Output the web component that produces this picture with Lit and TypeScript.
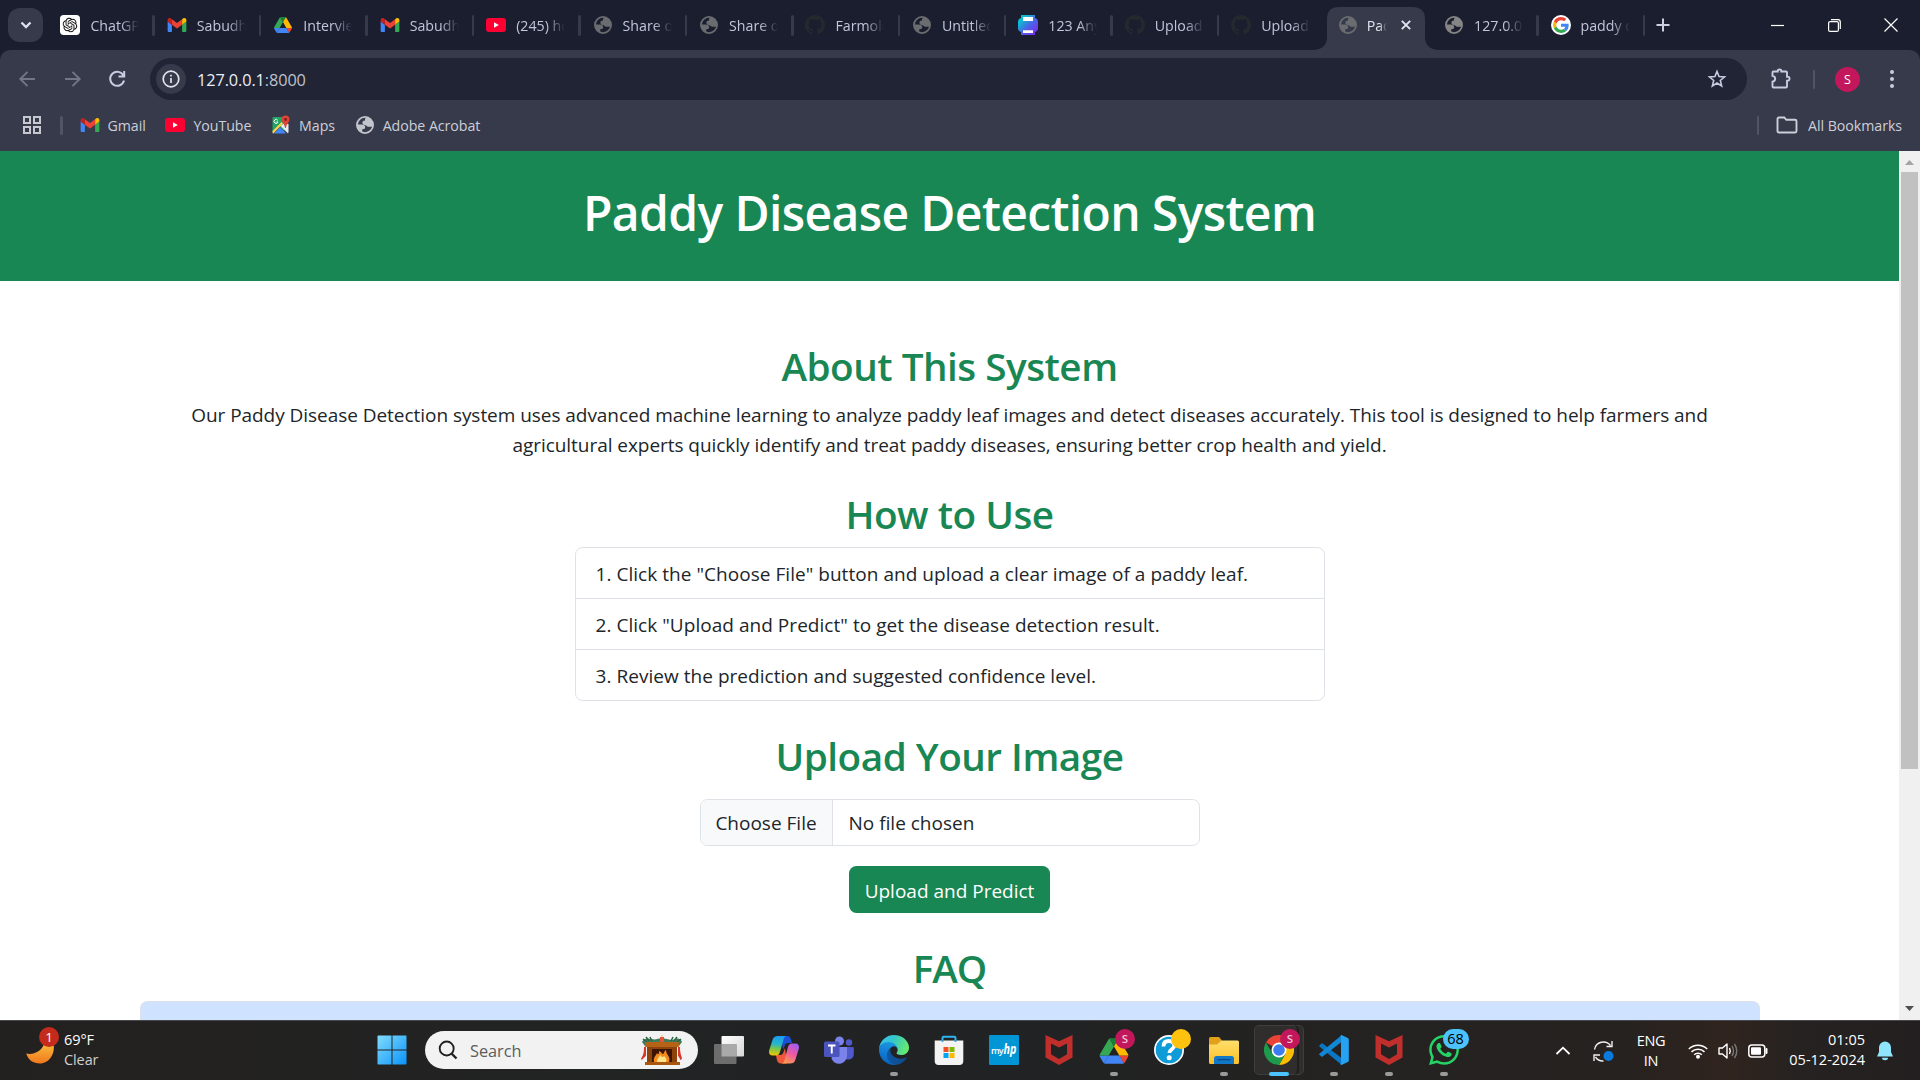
import { LitElement, html, css, TemplateResult } from "lit";
import { customElement } from "lit/decorators.js";
import { classMap } from "lit/directives/class-map.js";

/* ---------- icons ---------- */

const gmail = html`<svg class="ico" width="20" height="20" viewBox="49 31 94 88">
  <path fill="#4285f4" d="M58 108h14V74L52 59v43c0 3.32 2.69 6 6 6" />
  <path fill="#34a853" d="M120 108h14c3.32 0 6-2.69 6-6V59l-20 15" />
  <path fill="#fbbc04" d="M120 48v26l20-15v-8c0-7.42-8.47-11.65-14.4-7.2" />
  <path fill="#ea4335" d="M72 74V48l24 18 24-18v26L96 92" />
  <path fill="#c5221f" d="M52 51v8l20 15V48l-5.6-4.2c-5.94-4.45-14.4-.22-14.4 7.2" />
</svg>`;

const drive = (size: number) => html`<svg class="ico" width=${size} height=${size} viewBox="-5 -6 97.3 90">
  <path fill="#4285f4" d="m6.6 66.85 3.85 6.65c.8 1.4 1.95 2.5 3.3 3.3l13.75-23.8h-27.5c0 1.55.4 3.1 1.2 4.5z" />
  <path fill="#34a853" d="m43.65 25-13.75-23.8c-1.35.8-2.5 1.9-3.3 3.3l-25.4 44a9.06 9.06 0 0 0-1.2 4.5h27.5z" />
  <path fill="#ea4335" d="m73.55 76.8c1.35-.8 2.5-1.9 3.3-3.3l1.6-2.75 7.65-13.25c.8-1.4 1.2-2.95 1.2-4.5h-27.502l5.852 11.5z" />
  <path fill="#188038" d="m43.65 25 13.75-23.8c-1.35-.8-2.9-1.2-4.5-1.2h-18.5c-1.6 0-3.15.45-4.5 1.2z" />
  <path fill="#4285f4" d="m59.8 53h-32.3l-13.75 23.8c1.35.8 2.9 1.2 4.5 1.2h50.8c1.6 0 3.15-.45 4.5-1.2z" />
  <path fill="#ffba00" d="m73.4 26.5-12.7-22c-.8-1.4-1.95-2.5-3.3-3.3l-13.75 23.8 16.15 28h27.45c0-1.55-.4-3.1-1.2-4.5z" />
</svg>`;

const youtube = html`<svg class="ico" width="20" height="20" viewBox="0 0 20 20">
  <rect x="0" y="3" width="20" height="14" rx="3" fill="#ff0033" />
  <path fill="#fff" d="M8 7.3v5.4l4.8-2.7z" />
</svg>`;

const globe = (color: string) => html`<svg class="ico" width="20" height="20" viewBox="0 0 20 20">
  <circle cx="10" cy="10" r="8.100" fill="none" stroke=${color} stroke-width="1.800" />
  <path fill=${color} d="M2 9.600h4.600c2.200 0 3.600 1 3.600 2.700 0 1.500-.9 1.900-2.300 1.900H7.200v3.600C4 16.800 1.600 13.800 2 9.600z" />
  <path fill=${color} d="M12.600 2.300C11 2.600 10 3.300 10 4.400v1.200C8.400 5.600 7.400 6.400 7.400 7.700S8.600 9.900 10.400 10.200c1.200.2 1.400 1.300 2.600 1.600h4.700c1-4.500-1.700-8.500-5.100-9.500z" />
</svg>`;

const github = html`<svg class="ico" width="20" height="20" viewBox="0 0 16 16">
  <path fill="#24292e" d="M8 0C3.58 0 0 3.58 0 8c0 3.54 2.29 6.53 5.47 7.59.4.07.55-.17.55-.38 0-.19-.01-.82-.01-1.49-2.01.37-2.53-.49-2.69-.94-.09-.23-.48-.94-.82-1.13-.28-.15-.68-.52-.01-.53.63-.01 1.08.58 1.23.82.72 1.21 1.87.87 2.33.66.07-.52.28-.87.51-1.07-1.78-.2-3.64-.89-3.64-3.95 0-.87.31-1.59.82-2.15-.08-.2-.36-1.02.08-2.12 0 0 .67-.21 2.2.82.64-.18 1.32-.27 2-.27s1.36.09 2 .27c1.53-1.04 2.2-.82 2.2-.82.44 1.1.16 1.92.08 2.12.51.56.82 1.27.82 2.15 0 3.07-1.87 3.75-3.65 3.95.29.25.54.73.54 1.48 0 1.07-.01 1.93-.01 2.2 0 .21.15.46.55.38A8.01 8.01 0 0 0 16 8c0-4.42-3.58-8-8-8" />
</svg>`;

const openai = html`<svg class="ico" width="20" height="20" viewBox="-4.500 -4.500 33 33">
  <rect x="-4.500" y="-4.500" width="33" height="33" rx="6" fill="#fff" />
  <path fill="#111" d="M22.2819 9.8211a5.9847 5.9847 0 0 0-.5157-4.9108 6.0462 6.0462 0 0 0-6.5098-2.9A6.0651 6.0651 0 0 0 4.9807 4.1818a5.9847 5.9847 0 0 0-3.9977 2.9 6.0462 6.0462 0 0 0 .7427 7.0966 5.98 5.98 0 0 0 .511 4.9107 6.051 6.051 0 0 0 6.5146 2.9001A5.9847 5.9847 0 0 0 13.2599 24a6.0557 6.0557 0 0 0 5.7718-4.2058 5.9894 5.9894 0 0 0 3.9977-2.9001 6.0557 6.0557 0 0 0-.7475-7.0729zm-9.022 12.6081a4.4755 4.4755 0 0 1-2.8764-1.0408l.1419-.0804 4.7783-2.7582a.7948.7948 0 0 0 .3927-.6813v-6.7369l2.02 1.1686a.071.071 0 0 1 .038.052v5.5826a4.504 4.504 0 0 1-4.4945 4.4944zm-9.6607-4.1254a4.4708 4.4708 0 0 1-.5346-3.0137l.142.0852 4.783 2.7582a.7712.7712 0 0 0 .7806 0l5.8428-3.3685v2.3324a.0804.0804 0 0 1-.0332.0615L9.74 19.9502a4.4992 4.4992 0 0 1-6.1408-1.6464zM2.3408 7.8956a4.485 4.485 0 0 1 2.3655-1.9728V11.6a.7664.7664 0 0 0 .3879.6765l5.8144 3.3543-2.0201 1.1685a.0757.0757 0 0 1-.071 0l-4.8303-2.7865A4.504 4.504 0 0 1 2.3408 7.872zm16.5963 3.8558L13.1038 8.364 15.1192 7.2a.0757.0757 0 0 1 .071 0l4.8303 2.7913a4.4944 4.4944 0 0 1-.6765 8.1042v-5.6772a.79.79 0 0 0-.407-.667zm2.0107-3.0231l-.142-.0852-4.7735-2.7818a.7759.7759 0 0 0-.7854 0L9.409 9.2297V6.8974a.0662.0662 0 0 1 .0284-.0615l4.8303-2.7866a4.4992 4.4992 0 0 1 6.6802 4.66zM8.3065 12.863l-2.02-1.1638a.0804.0804 0 0 1-.038-.0567V6.0742a4.4992 4.4992 0 0 1 7.3757-3.4537l-.142.0805L8.704 5.459a.7948.7948 0 0 0-.3927.6813zm1.0976-2.3654l2.602-1.4998 2.6069 1.4998v2.9994l-2.5974 1.4997-2.6067-1.4997Z" />
</svg>`;

const printer = html`<svg class="ico" width="20" height="20" viewBox="0 0 20 20">
  <defs><linearGradient id="pr" x1="0" y1="0" x2="1" y2="1">
    <stop offset="0" stop-color="#00c4cc" /><stop offset=".25" stop-color="#12b5d2" /><stop offset=".55" stop-color="#4a63e8" /><stop offset="1" stop-color="#8b1cf0" />
  </linearGradient></defs>
  <path fill="url(#pr)" d="M3 0h14v3l2 1 1 2v8l-1 2-2 1v3H3v-3l-2-1-1-2V6l1-2 2-1z" />
  <path fill="#fff" d="M5 2h10v4H5zM5 15.300h10v2.700H5z" />
</svg>`;

const google = html`<svg class="ico" width="20" height="20" viewBox="-6 -6 60 60">
  <circle cx="24" cy="24" r="30" fill="#fff" />
  <path fill="#EA4335" d="M24 9.5c3.54 0 6.71 1.22 9.21 3.6l6.85-6.85C35.900 2.380 30.470 0 24 0 14.620 0 6.510 5.380 2.560 13.220l7.980 6.190C12.430 13.720 17.740 9.500 24 9.500z" />
  <path fill="#4285F4" d="M46.980 24.550c0-1.570-.15-3.090-.38-4.550H24v9.020h12.940c-.58 2.960-2.260 5.480-4.780 7.180l7.730 6c4.510-4.180 7.090-10.360 7.090-17.650z" />
  <path fill="#FBBC05" d="M10.530 28.590c-.48-1.450-.76-2.990-.76-4.590s.27-3.140.76-4.590l-7.980-6.190C.92 16.460 0 20.120 0 24c0 3.880.92 7.540 2.560 10.780l7.970-6.190z" />
  <path fill="#34A853" d="M24 48c6.480 0 11.930-2.130 15.890-5.810l-7.730-6c-2.150 1.450-4.920 2.300-8.160 2.300-6.260 0-11.570-4.220-13.470-9.910l-7.980 6.190C6.510 42.620 14.620 48 24 48z" />
</svg>`;

const maps = html`<svg class="ico" width="20" height="20" viewBox="0 0 20 20">
  <path fill="#1fa463" d="M2.500 2h11v14.500l-6-6-6 7V3a1 1 0 0 1 1-1z" />
  <path fill="#e8eaed" d="M17.500 9v8a1.500 1.500 0 0 1-.7 1.300L9.500 11l4-3z" />
  <path fill="#4285f4" d="M3 18.500l6-6.500 6.200 6.500z" />
  <path fill="#ffd04b" d="M1.500 16L10.500 7l1.500 1.600-9.600 9.900c-.6 0-.9-.5-.9-1z" />
  <path d="M6.800 5.300A2 2 0 1 0 7 7H5.300" fill="none" stroke="#fff" stroke-width="1" />
  <path fill="#db4437" d="M14.500.5a4 4 0 0 1 4 4c0 3-3 4-3.600 8.500h-.8c-.6-4.500-3.600-5.500-3.600-8.500a4 4 0 0 1 4-4z" />
  <circle cx="14.500" cy="4.500" r="1.400" fill="#7d2019" />
</svg>`;

const fireplace = html`<svg width="42" height="32" viewBox="0 0 42 32">
  <path d="M1 8C5 1 12 7 16 5S27 5 30 6s8-5 11 2l-3 4-3-4H7l-3 4z" fill="#3f7d5a" />
  <path d="M2 5l4 3M5 3l3 4M36 3l-3 4M40 5l-4 3M9 3l2 4M32 3l-2 4" stroke="#2c6245" stroke-width="1.500" />
  <rect x="19" y="3" width="4" height="7" fill="#e2543e" /><path d="M20.300 2.500Q21-1 21.700 2.500z" fill="#f7a531" />
  <rect x="4" y="8" width="34" height="5" rx="1" fill="#b56417" />
  <rect x="6" y="13" width="30" height="16" fill="#8e430c" />
  <rect x="4" y="28" width="35" height="3" fill="#a9570f" />
  <rect x="11" y="15" width="20" height="13" fill="#3b1405" />
  <path d="M13 28c-1-5 2-6 3-9 1 2 2 2 2-2 3 1 3 3 4 3s1-3 3-4c0 5 5 6 3 12z" fill="#f28a1c" />
  <path d="M16 28c0-4 2-4 3-7 2 2 3 3 4 1 2 2 3 3 2 6z" fill="#ffe28a" />
  <path d="M5 13v8c0 2-3 3-4 5l-1-1c1-3 3-3 3-12zM37 13v8c0 2 2 2 2 5l2-1c0-3-2-4-2-12z" fill="#d8382b" />
</svg>`;

const windows = html`<svg width="30" height="30" viewBox="0 0 30 30">
  <defs><linearGradient id="win" x1="0" y1="0" x2="1" y2="1"><stop offset="0" stop-color="#82dcfb" /><stop offset="1" stop-color="#0a93fb" /></linearGradient></defs>
  <path fill="url(#win)" d="M1 .5h13.500v14H.5V1zM15.500.5H29l.5.5v13.500h-14zM.5 15.500h14v14H1l-.5-.5zM15.500 15.500h14V29l-.5.5H15.500z" />
</svg>`;

const taskView = html`<svg width="30" height="30" viewBox="0 0 30 30">
  <defs><linearGradient id="tv" x1="0" y1="0" x2="1" y2="1"><stop offset="0" stop-color="#fff" /><stop offset="1" stop-color="#d6d6d6" /></linearGradient></defs>
  <rect x="7.500" y="1" width="22.500" height="20.500" rx="1" fill="url(#tv)" />
  <rect x="0" y="9" width="22.500" height="20" rx="1" fill="#6d6d6d" />
  <rect x="7.500" y="9" width="15" height="12.500" fill="#a9a9a9" />
</svg>`;

const copilot = html`<svg width="30" height="30" viewBox="0 0 30 30">
  <defs>
    <linearGradient id="c1" x1=".3" y1="0" x2=".2" y2="1"><stop offset="0" stop-color="#1c9df0" /><stop offset=".4" stop-color="#25b7c8" /><stop offset=".65" stop-color="#7cc64a" /><stop offset="1" stop-color="#f4c800" /></linearGradient>
    <linearGradient id="c2" x1=".7" y1="0" x2=".2" y2="1"><stop offset="0" stop-color="#a45cf0" /><stop offset=".45" stop-color="#ee5aa0" /><stop offset="1" stop-color="#ffa04a" /></linearGradient>
  </defs>
  <path fill="#1b4fd8" d="M12 1h6c2.500 0 3.500 1.500 4.200 4L23 8h-4c-2 0-3 1-3.500 3l-1.500 4z" />
  <path fill="#f0583a" d="M18 28.500h-6c-2.500 0-3.500-1.500-4.200-4L7 20h4c2 0 3-1 3.500-3l1.500-4z" />
  <path fill="url(#c1)" d="M9 1h9c-2 0-3 1.500-3.500 3.500L11 17c-.8 2.500-2 3.500-4 3.500H3.500C.5 20.500-.5 18 .3 15L3.500 5C4.500 2 6 1 9 1z" />
  <path fill="url(#c2)" d="M21 28.500h-9c2 0 3-1.500 3.500-3.500L19 12c.8-2.500 2-3.500 4-3.500h3.500c3 0 4 2.500 3.200 5.500l-3.200 10.500c-1 3-2.500 4-5.500 4z" />
</svg>`;

const teams = html`<svg width="30" height="30" viewBox="0 0 30 30">
  <circle cx="25" cy="7.500" r="3.200" fill="#5059c9" /><circle cx="15.500" cy="6" r="4.500" fill="#7b83eb" />
  <path fill="#5059c9" d="M20 12h8.500a1.300 1.300 0 0 1 1.300 1.300V19a5.500 5.500 0 0 1-8 5z" />
  <path fill="#7b83eb" d="M9 12h14v9a8 8 0 0 1-15.500 2.500z" />
  <rect x="0" y="6.500" width="15.500" height="15.500" rx="1.500" fill="#4b53bc" />
  <path d="M4 10.500h7.500M7.750 10.500v8" stroke="#fff" stroke-width="1.900" />
</svg>`;

const edge = html`<svg width="30" height="30" viewBox="0 0 256 256">
  <defs>
    <linearGradient id="e1" x1="0" y1=".5" x2="1" y2=".6"><stop offset="0" stop-color="#0c59a4" /><stop offset="1" stop-color="#114a8b" /></linearGradient>
    <linearGradient id="e2" x1=".6" y1="0" x2=".4" y2="1"><stop offset="0" stop-color="#1b9de2" /><stop offset=".5" stop-color="#127cd5" /><stop offset="1" stop-color="#0960b8" /></linearGradient>
    <linearGradient id="e3" x1="0" y1=".2" x2="1" y2=".5"><stop offset="0" stop-color="#35c1f1" /><stop offset=".45" stop-color="#36c6c9" /><stop offset="1" stop-color="#66eb6e" /></linearGradient>
  </defs>
  <g transform="translate(-4.630 -4.920)">
    <path fill="url(#e1)" d="M235.680 195.460a93.730 93.730 0 0 1-10.540 4.710 101.870 101.870 0 0 1-35.900 6.460c-47.320 0-88.540-32.550-88.540-74.320A31.480 31.480 0 0 1 117.130 105c-42.800 1.800-53.800 46.400-53.800 72.530 0 73.880 68.090 81.370 82.760 81.370 7.910 0 19.840-2.300 27-4.560l1.310-.44a128.340 128.340 0 0 0 66.600-52.800 4 4 0 0 0-5.320-5.640z" />
    <path fill="url(#e2)" d="M110.340 246.340A79.200 79.200 0 0 1 87.600 225a80.720 80.720 0 0 1 29.530-120c3.120-1.470 8.450-4.130 15.540-4a32.350 32.350 0 0 1 25.690 13 31.880 31.880 0 0 1 6.360 18.660c0-.21 24.460-79.600-80-79.600-43.900 0-80 41.660-80 78.210a130.150 130.150 0 0 0 12.110 56 128 128 0 0 0 156.380 67.110 75.550 75.550 0 0 1-62.780-8z" />
    <path fill="url(#e3)" d="M156.940 153.780c-.81 1.050-3.300 2.500-3.300 5.660 0 2.610 1.700 5.120 4.720 7.230 14.380 10 41.490 8.680 41.560 8.680a59.560 59.560 0 0 0 30.270-8.350 61.380 61.380 0 0 0 30.430-52.880c.26-22.410-8-37.310-11.340-43.910C228.090 28.760 182.350 5 132.610 5a128 128 0 0 0-128 126.200c.48-36.540 36.800-66.050 80-66.050 3.500 0 23.460.34 42 10.070 16.340 8.580 24.900 18.940 30.850 29.210 6.180 10.670 7.280 24.150 7.280 29.520s-2.740 13.330-7.800 19.830z" />
  </g>
</svg>`;

const store = html`<svg width="30" height="30" viewBox="0 0 30 30">
  <path d="M8.500 6.500V3q0-1.200 1.200-1.200h10.600q1.200 0 1.200 1.200v3.500" fill="none" stroke="#2fb4f0" stroke-width="2" />
  <path fill="#f3f3f3" d="M.7 5.500h28.600V26a4 4 0 0 1-4 4H4.700a4 4 0 0 1-4-4z" />
  <path d="M8.500 5v1.800M21.500 5v1.800" stroke="#1c8fd0" stroke-width="2" />
  <path fill="#f25022" d="M9.500 12h5v5h-5z" /><path fill="#7fba00" d="M15.500 12h5v5h-5z" />
  <path fill="#00a4ef" d="M9.500 18h5v5h-5z" /><path fill="#ffb900" d="M15.500 18h5v5h-5z" />
</svg>`;

const myhp = html`<svg width="30" height="30" viewBox="0 0 30 30">
  <rect width="30" height="30" rx="1" fill="#0096d6" />
  <text x="2" y="18.500" font-family="Open Sans, sans-serif" font-size="9" font-weight="600" fill="#fff" textLength="12.500">my</text>
  <text x="14.500" y="19" font-family="Open Sans, sans-serif" font-size="14.500" font-style="italic" font-weight="700" fill="#fff" textLength="13" lengthAdjust="spacingAndGlyphs">hp</text>
</svg>`;

const mcafee = html`<svg width="30" height="30" viewBox="0 0 30 30">
  <path fill="#c12f2c" fill-rule="evenodd" d="M1.500 0L15 6.200 28.500 0v22.500L15 30 1.500 22.500zM7 8.600v10.600l8 4.700 8-4.700V8.600l-8 3.900z" />
</svg>`;

const help = html`<svg width="30" height="30" viewBox="0 0 30 30">
  <circle cx="15" cy="15" r="15" fill="#fff" /><circle cx="15" cy="15" r="13.300" fill="#0e9bd8" />
  <path d="M9.500 11.500c0-4 2.300-5.500 5.300-5.500 3.400 0 5.500 1.700 5.500 4.500 0 3.800-5 3.700-5 7.500" fill="none" stroke="#fff" stroke-width="3.800" />
  <circle cx="15.200" cy="22.700" r="2.500" fill="#fff" />
</svg>`;

const explorer = html`<svg width="30" height="30" viewBox="0 0 30 30">
  <defs><linearGradient id="fx" x1="0" y1="0" x2="0" y2="1"><stop offset="0" stop-color="#ffdf6b" /><stop offset="1" stop-color="#fbbf28" /></linearGradient></defs>
  <path fill="#e2a11a" d="M0 3.500Q0 2 1.500 2h8.500l3 3.500V12H0z" />
  <path fill="url(#fx)" d="M12.500 5.500H28.500Q30 5.500 30 7v20.500q0 1.500-1.500 1.500h-27Q0 29 0 27.500v-18h8z" />
  <path fill="#1177c8" d="M5 29v-5.500q0-2.500 2.500-2.500h15q2.500 0 2.500 2.500V29z" />
  <path d="M9 24.700h12" stroke="#0a4a86" stroke-width="1.200" stroke-linecap="round" />
</svg>`;

const chrome = html`<svg width="30" height="30" viewBox="0 0 48 48">
  <path fill="#ea4335" d="M24 24L3.200 12A24 24 0 0 1 44.800 12H24z" />
  <path fill="#fbbc04" d="M24 12h20.800A24 24 0 0 1 24 48l10.400-18z" />
  <path fill="#1e9a4c" d="M3.200 12A24 24 0 0 0 24 48l10.400-18L24 24l-10.400 6z" />
  <circle cx="24" cy="24" r="12" fill="#fff" /><circle cx="24" cy="24" r="9.300" fill="#3b7ded" />
</svg>`;

const vscode = html`<svg width="30" height="30" viewBox="0 0 30 30">
  <path fill="#0a76c4" d="M.6 10.200l1.800-1.700q.6-.5 1.300 0L22.500 23v6.700L.6 11.700q-.8-.7 0-1.500z" />
  <path fill="#1287d6" d="M.6 20l1.800 1.600q.6.500 1.300 0L22.500 7V.3L.6 18.500q-.8.700 0 1.500z" />
  <path fill="#25a3f2" d="M22 .2q.4-.3 1 0l5.800 2.800q1 .5 1 1.600v20.800q0 1.100-1 1.600L23 29.800q-.6.300-1 0-1-.8 0-1.800V2q-1-1 0-1.800z" />
</svg>`;

const whatsapp = html`<svg width="30" height="30" viewBox="0 0 24 24">
  <path fill="#25d366" d="M17.472 14.382c-.297-.149-1.758-.867-2.030-.967-.273-.099-.471-.148-.67.15-.197.297-.767.966-.94 1.164-.173.199-.347.223-.644.075-.297-.15-1.255-.463-2.390-1.475-.883-.788-1.480-1.761-1.653-2.059-.173-.297-.018-.458.13-.606.134-.133.298-.347.446-.52.149-.174.198-.298.298-.497.099-.198.05-.371-.025-.52-.075-.149-.669-1.612-.916-2.207-.242-.579-.487-.5-.669-.51-.173-.008-.371-.01-.57-.01-.198 0-.52.074-.792.372-.272.297-1.040 1.016-1.040 2.479 0 1.462 1.065 2.875 1.213 3.074.149.198 2.096 3.200 5.077 4.487.709.306 1.262.489 1.694.625.712.227 1.360.195 1.871.118.571-.085 1.758-.719 2.006-1.413.248-.694.248-1.289.173-1.413-.074-.124-.272-.198-.57-.347m-5.421 7.403h-.004a9.870 9.870 0 0 1-5.031-1.378l-.361-.214-3.741.982.998-3.648-.235-.374a9.860 9.860 0 0 1-1.510-5.260c.001-5.450 4.436-9.884 9.888-9.884 2.640 0 5.122 1.030 6.988 2.898a9.825 9.825 0 0 1 2.893 6.994c-.003 5.450-4.437 9.884-9.885 9.884m8.413-18.297A11.815 11.815 0 0 0 12.050 0C5.495 0 .16 5.335.157 11.892c0 2.096.547 4.142 1.588 5.945L.057 24l6.305-1.654a11.882 11.882 0 0 0 5.683 1.448h.005c6.554 0 11.890-5.335 11.893-11.893a11.821 11.821 0 0 0-3.480-8.413z" />
</svg>`;

/* ---------- browser chrome ---------- */

interface Tab { icon: TemplateResult; title: string; active?: boolean; bare?: boolean }

const GREY = "#6a6c70";
const TABS: Tab[] = [
  { icon: openai, title: "ChatGP" },
  { icon: gmail, title: "Sabudh" },
  { icon: drive(20), title: "Intervie" },
  { icon: gmail, title: "Sabudh" },
  { icon: youtube, title: "(245) ho" },
  { icon: globe(GREY), title: "Share o" },
  { icon: globe(GREY), title: "Share o" },
  { icon: github, title: "Farmolo" },
  { icon: globe(GREY), title: "Untitled" },
  { icon: printer, title: "123 Any" },
  { icon: github, title: "Upload" },
  { icon: github, title: "Upload", bare: true },
  { icon: globe(GREY), title: "Pad", active: true },
  { icon: globe("#858585"), title: "127.0.0." },
  { icon: google, title: "paddy d" },
];

@customElement("browser-chrome")
class BrowserChrome extends LitElement {
  static styles = css`
    :host { display: block; height: 151px; background: #1b1e2f; font-family: "Open Sans", "Noto Sans", sans-serif; font-size: 14.2px; color: #c3c6da; }
    .strip { display: flex; height: 50px; align-items: center; padding-left: 8px; }
    .search-tabs { width: 35px; height: 34px; border-radius: 12px; background: #363a4b; display: grid; place-items: center; margin-right: 4.500px; }
    .tab { position: relative; box-sizing: border-box; width: 106.450px; height: 50px; padding-left: 12.900px; display: flex; align-items: center; flex: none; }
    .tab::after { content: ""; position: absolute; right: -1px; top: 15px; width: 2.500px; height: 21px; border-radius: 2px; background: #363a4b; }
    .tab.bare::after, .tab.active::after { display: none; }
    .ico { flex: none; display: block; }
    .title { width: 49px; margin-left: 10px; overflow: hidden; white-space: nowrap; mask-image: linear-gradient(90deg, #000 62%, transparent 100%); }
    .active { z-index: 1; }
    .shape { position: absolute; left: -10.500px; top: 7px; }
    .active .ico { position: relative; }
    .active .title { position: relative; width: 20px; color: #e3e4ee; margin-left: 9px; }
    .active .x { position: relative; margin-left: 14px; }
    .plus { margin-left: 11.500px; }
    .win { display: flex; margin-left: auto; gap: 43.500px; padding-right: 22px; align-items: center; }
    .bar { display: flex; align-items: center; height: 58px; background: #363a4b; border-radius: 10px 10px 0 0; box-sizing: border-box; padding-left: 15px; }
    .nav { display: flex; gap: 21px; width: 135px; }
    .omni { box-sizing: border-box; width: 1597px; height: 42px; border-radius: 21px; background: #202435; display: flex; align-items: center; padding: 0 20px 0 6px; }
    .info { width: 30px; height: 30px; border-radius: 50%; background: #363a4b; display: grid; place-items: center; margin-right: 11px; }
    .url { font-size: 16.300px; letter-spacing: -.1px; color: #eceef5; flex: 1; padding-top: 1px; }
    .url span { color: #bfc1cc; }
    .tools { display: flex; align-items: center; flex: 1; padding-left: 23px; }
    .vsep { width: 2px; height: 19px; border-radius: 2px; background: #505466; }
    .avatar { width: 25px; height: 25px; border-radius: 50%; background: #c2185b; color: #fff; font-size: 12.500px; display: grid; place-items: center; margin: 0 30px 0 20px; }
    .marks { height: 34px; background: #363a4b; display: flex; align-items: center; padding: 0 18px 9px 22px; color: #cdcfd8; letter-spacing: -.05px; }
    .marks .vsep { width: 2.500px; margin: 0 17px 0 18px; }
    .mark { display: flex; align-items: center; gap: 8px; margin-right: 19.700px; }
    .all { margin-left: auto; display: flex; align-items: center; }
    .all svg { margin-right: 10px; }
  `;

  private tab(t: Tab) {
    return html`<div class=${classMap({ tab: true, active: !!t.active, bare: !!t.bare })}>
      ${t.active ? html`<svg class="shape" width="124" height="43" viewBox="0 0 124 43"><path fill="#363a4b" d="M0 43Q13 42 13 30V12Q13 0 25 0H98Q111 0 111 12V30Q111 42 124 43z" /></svg>` : ""}
      ${t.icon}<span class="title">${t.title}</span>
      ${t.active ? html`<svg class="x" width="10" height="10" viewBox="0 0 10 10"><path d="M.8.8l8.400 8.400M9.200.8L.8 9.200" stroke="#e3e4ee" stroke-width="1.900" /></svg>` : ""}
    </div>`;
  }

  render() {
    return html`
      <div class="strip">
        <div class="search-tabs"><svg width="12" height="12" viewBox="0 0 12 12"><path d="M1.500 3.500L6 8l4.500-4.500" fill="none" stroke="#dfe1ee" stroke-width="2.300" /></svg></div>
        ${TABS.map((t) => this.tab(t))}
        <svg class="plus" width="14" height="14" viewBox="0 0 14 14"><path d="M7 .5v13M.5 7h13" stroke="#cdd0e2" stroke-width="2" /></svg>
        <div class="win">
          <svg width="13" height="13" viewBox="0 0 13 13"><path d="M0 6.500h13" stroke="#fff" stroke-width="1.200" /></svg>
          <svg width="13" height="13" viewBox="0 0 13 13"><rect x=".6" y="2.600" width="9.800" height="9.800" rx="1.500" fill="none" stroke="#fff" stroke-width="1.200" /><path d="M3 .7h7a2.300 2.300 0 0 1 2.300 2.300v7" fill="none" stroke="#fff" stroke-width="1.200" /></svg>
          <svg width="14" height="14" viewBox="0 0 14 14"><path d="M.5.5l13 13M13.500.5l-13 13" stroke="#fff" stroke-width="1.200" /></svg>
        </div>
      </div>
      <div class="bar">
        <div class="nav">
          <svg width="24" height="24" viewBox="0 0 24 24"><path d="M20 12H5.500M12.500 4.800L5.300 12l7.200 7.200" fill="none" stroke="#737687" stroke-width="1.900" /></svg>
          <svg width="24" height="24" viewBox="0 0 24 24"><path d="M5 12h14.500M12.500 4.800l7.200 7.200-7.200 7.200" fill="none" stroke="#737687" stroke-width="1.900" /></svg>
          <svg width="24" height="24" viewBox="0 0 24 24"><path d="M18.400 8.500A7 7 0 1 0 19 13.500M19.200 4v5.500h-5.700" fill="none" stroke="#c9cce0" stroke-width="2" /></svg>
        </div>
        <div class="omni">
          <div class="info"><svg width="18" height="18" viewBox="0 0 18 18"><circle cx="9" cy="9" r="7.800" fill="none" stroke="#e3e4ee" stroke-width="1.700" /><path d="M9 8v5M9 4.800v1.800" stroke="#e3e4ee" stroke-width="1.700" /></svg></div>
          <div class="url">127.0.0.1<span>:8000</span></div>
          <svg width="20" height="20" viewBox="0 0 20 20"><path d="M10 2.500l2.050 5.100 5.450.4-4.200 3.500 1.350 5.400L10 13.950 5.350 16.900l1.350-5.400L2.500 8l5.450-.4z" fill="none" stroke="#c9cce0" stroke-width="1.600" /></svg>
        </div>
        <div class="tools">
          <svg width="22" height="22" viewBox="0 0 22 22"><path d="M2.500 4.500q0-1 1-1h4.200q-.2-2 1.800-2t1.800 2h4.700q1 0 1 1v4.200q2.500-.2 2.500 2t-2.500 2v5.800q0 1-1 1h-12.500q-1 0-1-1v-4.800q2.700-.4 2.700-2.900T2.500 7.900z" fill="none" stroke="#c9cce0" stroke-width="1.900" /></svg>
          <div class="vsep" style="margin-left:21px"></div>
          <div class="avatar">S</div>
          <svg width="4" height="20" viewBox="0 0 4 20"><g fill="#c9cce0"><circle cx="2" cy="3" r="2" /><circle cx="2" cy="10" r="2" /><circle cx="2" cy="17" r="2" /></g></svg>
        </div>
      </div>
      <div class="marks">
        <svg width="20" height="20" viewBox="0 0 20 20"><path d="M2 2h6v6H2zM12 2h6v6h-6zM2 12h6v6H2zM12 12h6v6h-6z" fill="none" stroke="#c7c8cf" stroke-width="2" /></svg>
        <div class="vsep"></div>
        <div class="mark">${gmail}Gmail</div>
        <div class="mark">${youtube}YouTube</div>
        <div class="mark">${maps}Maps</div>
        <div class="mark">${globe("#c2c4cb")}Adobe Acrobat</div>
        <div class="all"><div class="vsep"></div>
          <svg width="22" height="18" viewBox="0 0 22 18"><path d="M1.500 3q0-1.500 1.500-1.500h5.300l2 2.300H19q1.500 0 1.500 1.500V15q0 1.500-1.500 1.500H3q-1.500 0-1.500-1.500z" fill="none" stroke="#cdcfd8" stroke-width="1.900" /></svg>All Bookmarks</div>
      </div>`;
  }
}

/* ---------- page ---------- */

@customElement("paddy-page")
class PaddyPage extends LitElement {
  static styles = css`
    :host { display: flex; height: 869px; overflow: hidden; background: #fff; color: #212529; font: 400 19px/30px "Open Sans", "Noto Sans", sans-serif; }
    .page { width: 1899px; }
    .hero { box-sizing: border-box; height: 130px; background: #198754; color: #fff; padding-top: 32px; text-align: center; }
    h1, h2, p, ol { margin: 0; padding: 0; font-weight: inherit; }
    h1 { font-size: 48px; line-height: 60px; font-weight: 600; letter-spacing: -.63px; }
    h2 { font-size: 38.700px; line-height: 48px; font-weight: 600; color: #198754; letter-spacing: -.5px; padding-top: 1px; margin-bottom: 9px; text-align: center; }
    .tight { letter-spacing: -1.100px; }
    .container { width: 1620px; margin: 0 auto; padding-top: 60px; }
    section { margin-bottom: 30px; }
    .lead { text-align: center; letter-spacing: -.044px; padding-top: 1px; margin-bottom: -1px; white-space: nowrap; }
    .steps { list-style: none; box-sizing: border-box; width: 750px; margin: 0 auto; border: 1px solid #dee2e6; border-radius: 7.500px; letter-spacing: .04px; }
    .steps li { padding: 11px 20px 9px; }
    .steps li + li { border-top: 1px solid #dee2e6; }
    .file { box-sizing: border-box; width: 500px; height: 47px; margin: 19px auto 20px; border: 1px solid #dee2e6; border-radius: 7.500px; display: flex; overflow: hidden; line-height: 47px; }
    .choose { background: #f8f9fa; width: 131px; text-align: center; border-right: 1px solid #dee2e6; }
    .none { padding-left: 16px; }
    .btn { display: block; margin: 0 auto; width: 201px; height: 47px; border: 0; border-radius: 7.500px; background: #198754; color: #fff; font: inherit; padding: 2px 0 0; }
    .accordion { box-sizing: border-box; height: 63px; border: 1px solid #dee2e6; border-bottom: 0; border-radius: 7.500px 7.500px 0 0; background: #cfe2ff; }
    .scroll { width: 21px; background: #f0f0f0; display: flex; flex-direction: column; align-items: center; justify-content: space-between; }
    .rail { display: flex; flex-direction: column; align-items: center; }
    .thumb { width: 17px; height: 597px; background: #c1c1c1; }
    .up { padding: 9px 0 7px; display: block; }
    .down { display: block; padding-bottom: 9px; }
  `;

  render() {
    return html`
      <div class="page">
        <header class="hero"><h1>Paddy Disease Detection System</h1></header>
        <main class="container">
          <section>
            <h2>About This System</h2>
            <p class="lead">Our Paddy Disease Detection system uses advanced machine learning to analyze paddy leaf images and detect diseases accurately. This tool is designed to help farmers and<br />agricultural experts quickly identify and treat paddy diseases, ensuring better crop health and yield.</p>
          </section>
          <section>
            <h2>How to Use</h2>
            <ol class="steps">
              <li>1. Click the "Choose File" button and upload a clear image of a paddy leaf.</li>
              <li>2. Click "Upload and Predict" to get the disease detection result.</li>
              <li>3. Review the prediction and suggested confidence level.</li>
            </ol>
          </section>
          <section>
            <h2>Upload Your Image</h2>
            <div class="file"><div class="choose">Choose File</div><div class="none">No file chosen</div></div>
            <button class="btn">Upload and Predict</button>
          </section>
          <section>
            <h2 class="tight">FAQ</h2>
            <div class="accordion"></div>
          </section>
        </main>
      </div>
      <div class="scroll">
        <div class="rail">
          <svg class="up" width="9" height="5" viewBox="0 0 9 5"><path d="M4.500 0L9 5H0z" fill="#a3a3a3" /></svg>
          <div class="thumb"></div>
        </div>
        <svg class="down" width="9" height="5" viewBox="0 0 9 5"><path d="M0 0h9L4.500 5z" fill="#505050" /></svg>
      </div>`;
  }
}

/* ---------- task bar ---------- */

interface App { icon: TemplateResult; running?: boolean; active?: boolean; badge?: TemplateResult }

const sBadge = html`<b class="badge s">S</b>`;
const APPS: App[] = [
  { icon: taskView }, { icon: copilot }, { icon: teams }, { icon: edge, running: true }, { icon: store }, { icon: myhp }, { icon: mcafee },
  { icon: drive(32), running: true, badge: sBadge },
  { icon: help, badge: html`<b class="badge dot"></b>` },
  { icon: explorer, running: true },
  { icon: chrome, active: true, badge: sBadge },
  { icon: vscode, running: true }, { icon: mcafee, running: true },
  { icon: whatsapp, running: true, badge: html`<b class="badge count">68</b>` },
];

@customElement("task-bar")
class TaskBar extends LitElement {
  static styles = css`
    :host { display: flex; box-sizing: border-box; height: 60px; border-top: 1px solid #46484b; background: linear-gradient(90deg, #232120 0, #222323 30%, #212223 55%, #252321 75%, #252220 84%, #30241e 90%, #252221 94%, #231f20); color: #fff; font: 400 14.500px/20px "Open Sans", "Noto Sans", sans-serif; }
    svg { display: block; flex: none; }
    .weather { display: flex; width: 377px; box-sizing: border-box; padding: 6px 0 0 24px; }
    .moon { position: relative; width: 40px; }
    .moon b { position: absolute; left: 15px; top: 0; width: 20px; height: 20px; border-radius: 50%; background: #c42b1c; font-weight: 400; font-size: 13.500px; text-align: center; line-height: 20px; }
    .moon svg { padding-top: 17px; }
    .weather p { margin: 3px 0 0; letter-spacing: -.1px; }
    .weather span { color: #cfcfcf; }
    .start { width: 48px; padding-top: 14px; }
    .search { box-sizing: border-box; width: 273px; height: 38px; margin-top: 10px; border-radius: 19px; background: #f2f2f2; display: flex; align-items: center; padding: 0 15px 0 13px; color: #5c5c5c; font-size: 16.300px; }
    .search span { flex: 1; padding: 2px 0 0 12px; }
    .apps { display: flex; padding-left: 3.500px; }
    .app { position: relative; width: 55px; height: 59px; display: flex; flex-direction: column; align-items: center; }
    .icon { position: relative; height: 30px; margin-top: 14px; display: grid; place-items: center; }
    .pill { position: relative; width: 8px; height: 4px; border-radius: 2px; background: #9a9a9a; margin-top: 6.500px; }
    .active .pill { width: 20px; background: #4cc2ff; }
    .plate { position: absolute; left: 2.500px; top: 4px; width: 50px; height: 50px; box-sizing: border-box; border: 1px solid #3e3e3e; border-radius: 5px; background: #2f2e2d; }
    .plate::before { content: ""; position: absolute; right: 4px; top: -1px; bottom: -1px; width: 6px; border-right: 2px solid #1f1f1f; border-radius: 0 5px 5px 0; }
    .badge { position: absolute; left: 16px; top: 8px; width: 20px; height: 20px; margin: 0 0 0 12.500px; border-radius: 50%; font-size: 11.500px; font-weight: 600; text-align: center; line-height: 20px; }
    .s { background: #c2185b; color: #f0c4d6; }
    .dot { background: #ffc20e; margin-left: 13px; }
    .count { background: #4cc2ff; color: #000; width: 26px; margin-left: 10px; border-radius: 10px; font-size: 14.500px; font-weight: 400; }
    .tray { display: flex; align-items: center; margin-left: auto; }
    .lang { text-align: center; width: 40px; letter-spacing: -.3px; margin: 0 17px 0 15px; }
    .status { display: flex; gap: 10px; align-items: center; }
    .clock { text-align: right; margin: -1px 12px 0 19px; width: 78px; }
  `;

  render() {
    return html`
      <div class="weather">
        <div class="moon">
          <svg width="32" height="24" viewBox="0 0 32 24"><defs><linearGradient id="mo" x1="0" y1="0" x2="0" y2="1"><stop offset="0" stop-color="#f9b93a" /><stop offset="1" stop-color="#f0781e" /></linearGradient></defs><path fill="url(#mo)" d="M2.300 9.500C9 11.500 18 7 20 0h9.500C31.500 10 25 19.500 16 19.500 9 19.500 4 16 2.300 9.500z" /></svg>
          <b>1</b>
        </div>
        <p>69°F<br /><span>Clear</span></p>
      </div>
      <div class="start">${windows}</div>
      <div class="search">
        <svg width="20" height="20" viewBox="0 0 20 20"><circle cx="8.700" cy="8.500" r="7" fill="none" stroke="#222" stroke-width="1.900" /><path d="M13.500 13.500l5 5" stroke="#222" stroke-width="2.400" /></svg>
        <span>Search</span>${fireplace}
      </div>
      <div class="apps">
        ${APPS.map((a) => html`<div class=${classMap({ app: true, active: !!a.active })}>
          ${a.active ? html`<i class="plate"></i>` : ""}
          <div class="icon">${a.icon}</div>
          ${a.running || a.active ? html`<i class="pill"></i>` : ""}
          ${a.badge ?? ""}
        </div>`)}
      </div>
      <div class="tray">
        <svg width="16" height="16" viewBox="0 0 16 16"><path d="M1.500 11L8 4.700l6.500 6.300" fill="none" stroke="#fff" stroke-width="1.800" /></svg>
        <svg style="margin-left:21px" width="24" height="24" viewBox="0 0 24 24"><path d="M2.500 10.500A9 9 0 0 1 18.500 6.500M20 2v5.500h-5.500M2 22v-6h6M3.500 18q3 4.500 8 4" fill="none" stroke="#f0f0f0" stroke-width="1.400" /><circle cx="16.500" cy="17" r="5" fill="#0a7bdc" /></svg>
        <div class="lang">ENG<br />IN</div>
        <div class="status">
          <svg width="20" height="16" viewBox="0 0 20 16"><g fill="none" stroke="#fff" stroke-width="1.500"><path d="M.8 6a13 13 0 0 1 18.400 0M3.500 8.900a9.200 9.200 0 0 1 13 0M6.200 11.700a5.400 5.400 0 0 1 7.600 0" /></g><circle cx="10" cy="13.700" r="2" fill="#fff" /></svg>
          <svg width="20" height="18" viewBox="0 0 20 18"><path d="M1 6h3.500L9 2v14l-4.500-4H1z" fill="none" stroke="#fff" stroke-width="1.400" stroke-linejoin="round" /><path d="M11.500 6q1.500 3 0 6" fill="none" stroke="#fff" stroke-width="1.400" /><path d="M14 4q3 5 0 10M16.500 2q4.500 7 0 14" fill="none" stroke="#777" stroke-width="1.400" /></svg>
          <svg width="20" height="14" viewBox="0 0 20 14"><rect x=".8" y="1" width="16" height="12" rx="3" fill="none" stroke="#fff" stroke-width="1.500" /><rect x="3" y="3.200" width="10" height="7.600" rx="1" fill="#fff" /><path d="M18.500 5v4" stroke="#fff" stroke-width="2" stroke-linecap="round" /></svg>
        </div>
        <div class="clock">01:05<br />05-12-2024</div>
        <svg style="margin-right:27px" width="16" height="20" viewBox="0 0 16 20"><path fill="#8fe3fb" d="M8 .5a6 6 0 0 1 6 6V11l2 4.500H0L2 11V6.500a6 6 0 0 1 6-6zM5 16.700h6a3 2.500 0 0 1-6 0z" /></svg>
      </div>`;
  }
}

@customElement("app-root")
class AppRoot extends LitElement {
  static styles = css`:host { display: block; width: 1920px; height: 1080px; overflow: hidden; }`;
  render() {
    return html`<browser-chrome></browser-chrome><paddy-page></paddy-page><task-bar></task-bar>`;
  }
}
